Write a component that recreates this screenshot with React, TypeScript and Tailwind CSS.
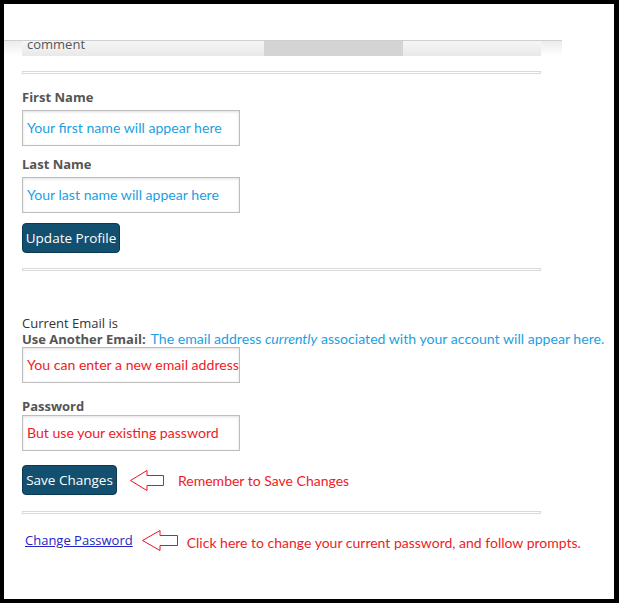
import React from "react";

const ann = { fontFamily: "Lato, 'Noto Sans', sans-serif" };
const os = { fontFamily: "'Open Sans', 'Noto Sans', sans-serif" };

function Arrow({ w, h }: { w: number; h: number }) {
  const head = Math.round(w * 0.5);
  const sh = Math.round(h * 0.22);
  const mid = h / 2;
  return (
    <svg width={w} height={h} viewBox={`0 0 ${w} ${h}`}>
      <path
        d={`M0.5 ${mid} L${head} 0.5 L${head} ${mid - sh} L${w - 0.5} ${mid - sh} L${w - 0.5} ${mid + sh} L${head} ${mid + sh} L${head} ${h - 0.5} Z`}
        fill="white"
        stroke="#e8141c"
        strokeWidth="1"
      />
    </svg>
  );
}

function DoubleLine() {
  return <div className="ml-[18px] w-[519px] h-[3px] border border-[#d9d9d9] box-border" />;
}

function Field({ text, color }: { text: string; color: string }) {
  return (
    <div className="w-[218px] h-[36px] border border-[#bdbdbd] shadow-[inset_0_1px_3px_rgba(0,0,0,0.12)] flex items-center pl-[4px] text-[14.1px] whitespace-nowrap overflow-hidden" style={{ ...ann, color }}>
      {text}
    </div>
  );
}

function Label({ children }: { children: React.ReactNode }) {
  return (
    <div className="text-[13px] font-bold text-[#555] leading-[18px]" style={os}>
      {children}
    </div>
  );
}

export default function App() {
  return (
    <div className="w-[619px] h-[603px] bg-black pt-[4px] pl-[4px] pr-[5px] pb-[4px]">
      <div className="w-full h-full bg-white overflow-hidden">
        <div className="h-[36px]" />
        <div className="w-[558px] h-[16px] border-t border-[#cfcfcf] flex">
          <div className="w-[18px] h-full bg-gradient-to-b from-[#ececec] to-white" />
          <div className="w-[242px] h-full bg-gradient-to-b from-[#f6f6f6] to-[#e9e9e9] pl-[5px]">
            <div className="text-[13px] text-[#555] leading-[16px] -mt-[5px]" style={os}>comment</div>
          </div>
          <div className="w-[139px] h-full bg-[#d4d4d4]" />
          <div className="w-[138px] h-full bg-gradient-to-b from-[#f6f6f6] to-[#e9e9e9]" />
          <div className="w-[21px] h-full bg-gradient-to-b from-[#ececec] to-white" />
        </div>
        <div className="h-[15px]" />
        <DoubleLine />
        <div className="pl-[18px]">
          <div className="h-[14px]" />
          <Label>First Name</Label>
          <div className="h-[4px]" />
          <Field text="Your first name will appear here" color="#1c9fe2" />
          <div className="h-[9px]" />
          <Label>Last Name</Label>
          <div className="h-[4px]" />
          <Field text="Your last name will appear here" color="#1c9fe2" />
          <div className="h-[10px]" />
          <button className="w-[98px] h-[30px] bg-[#134f6f] border border-[#0b3a54] rounded-[4px] text-white text-[13.5px] flex items-center justify-center" style={os}>
            Update Profile
          </button>
        </div>
        <div className="h-[15px]" />
        <DoubleLine />
        <div className="pl-[18px]">
          <div className="h-[45px]" />
          <div className="text-[13px] text-[#333] leading-[15px]" style={os}>Current Email is</div>
          <div className="flex items-baseline leading-[15px] whitespace-nowrap">
            <span className="text-[13px] font-bold text-[#555]" style={os}>Use Another Email:</span>
            <span className="ml-[5px] text-[14.1px] text-[#1c9fe2]" style={ann}>
              The email address <i>currently</i> associated with your account will appear here.
            </span>
          </div>
          <Field text="You can enter a new email address" color="#ee1c25" />
          <div className="h-[14px]" />
          <Label>Password</Label>
          <Field text="But use your existing password" color="#ee1c25" />
          <div className="h-[14px]" />
          <div className="flex items-center">
            <button className="w-[95px] h-[30px] bg-[#134f6f] border border-[#0b3a54] rounded-[4px] text-white text-[13.5px] flex items-center justify-center" style={os}>
              Save Changes
            </button>
            <div className="ml-[13px] mt-[1px]"><Arrow w={34} h={21} /></div>
            <span className="ml-[14px] text-[14px] text-[#ee1c25]" style={ann}>Remember to Save Changes</span>
          </div>
        </div>
        <div className="h-[16px]" />
        <DoubleLine />
        <div className="pl-[21px] mt-[14px] flex items-center">
          <a href="#" className="text-[13px] text-[#2424c8] underline" style={os}>Change Password</a>
          <div className="ml-[9px]"><Arrow w={36} h={21} /></div>
          <span className="ml-[9px] mt-[4px] text-[14px] text-[#ee1c25]" style={ann}>
            Click here to change your current password, and follow prompts.
          </span>
        </div>
      </div>
    </div>
  );
}
